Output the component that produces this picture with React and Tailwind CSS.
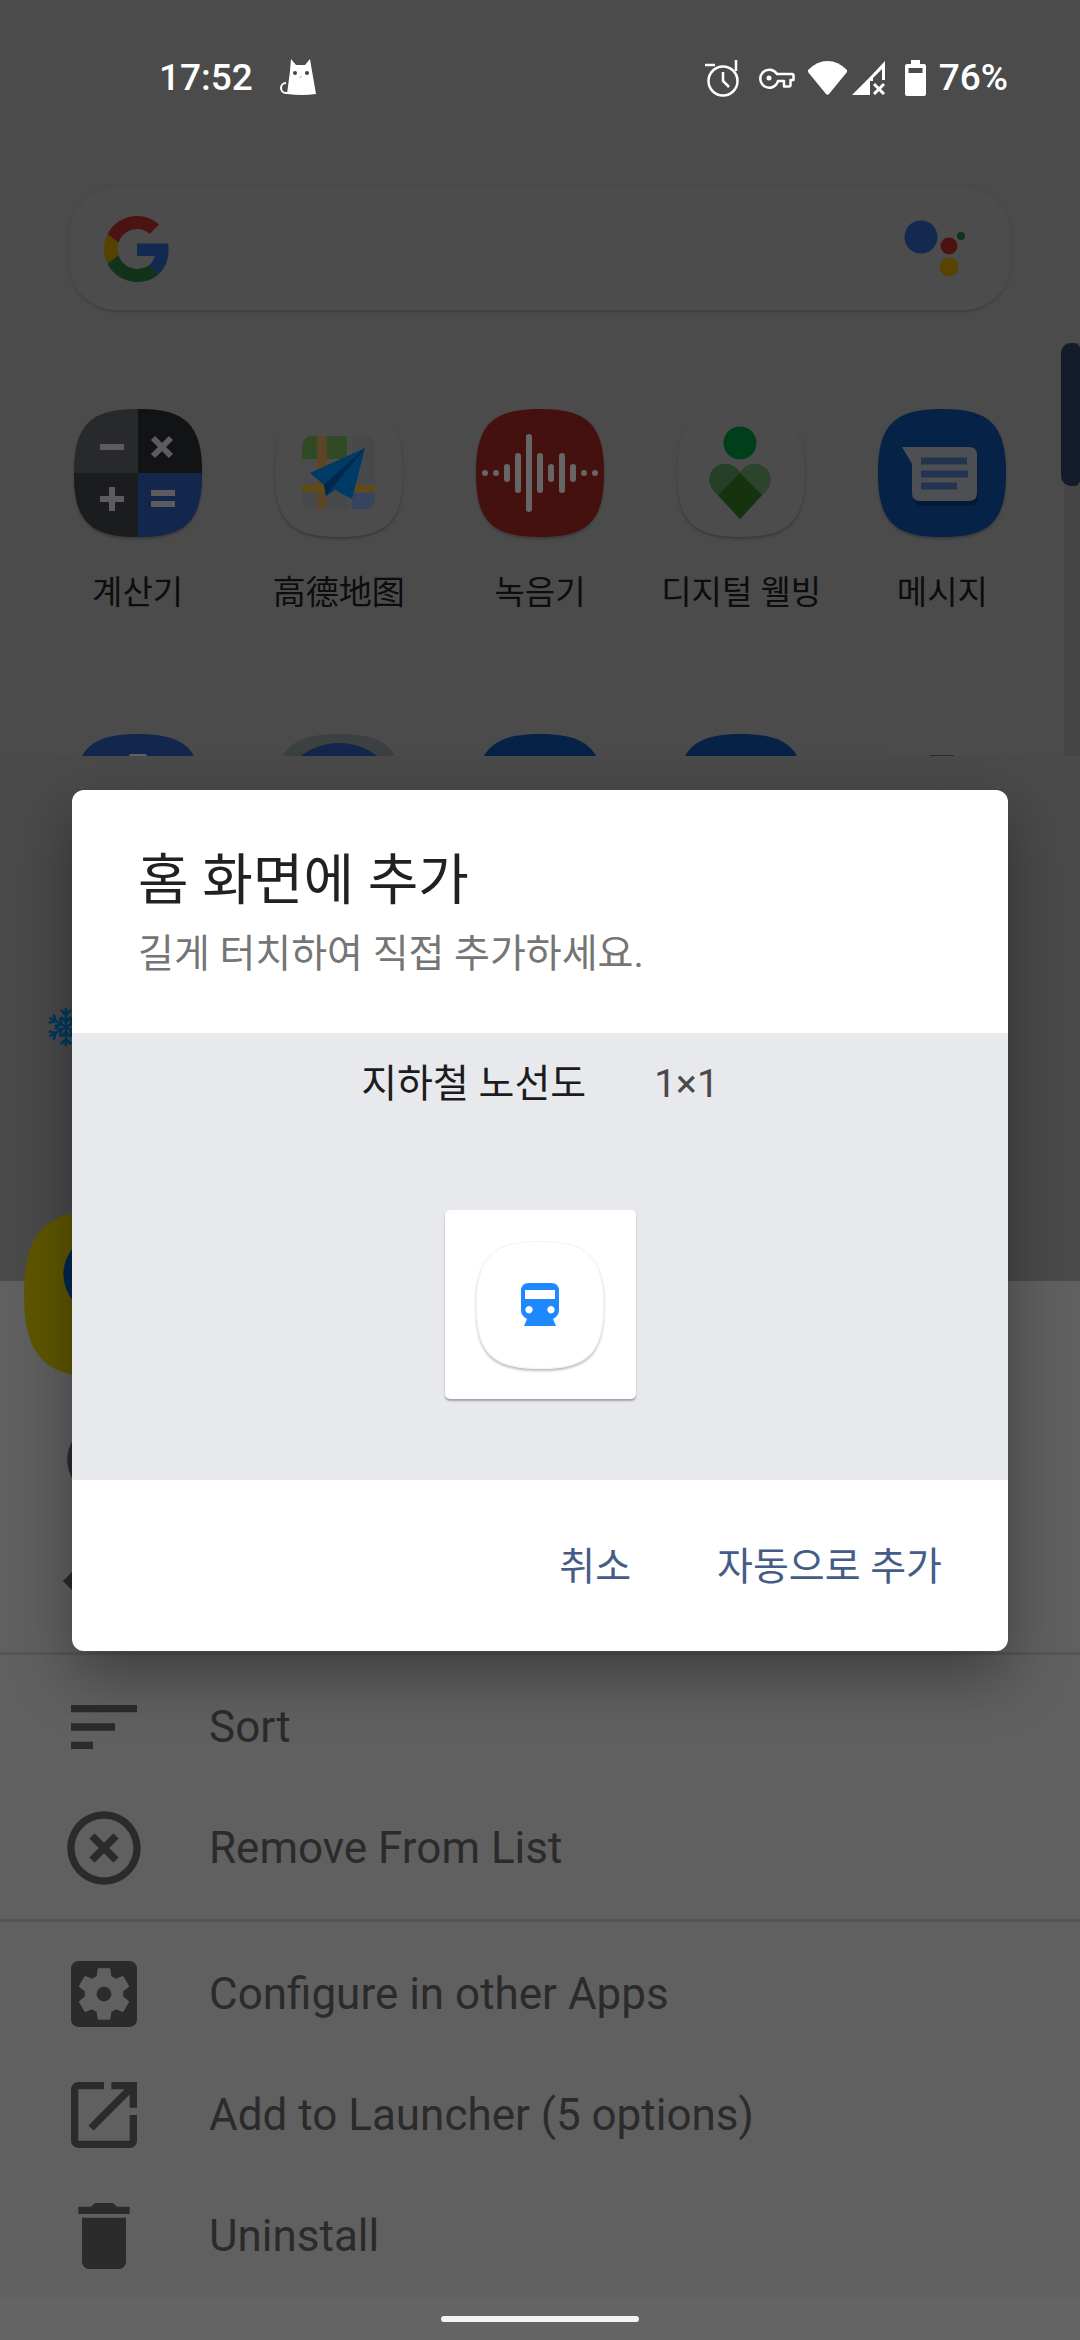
import React from "react";
import { MdSort, MdHighlightOff, MdSettingsApplications, MdOpenInNew, MdDelete, MdInfoOutline } from "react-icons/md";

const SQ = "M64 0C112 0 128 16 128 64S112 128 64 128 0 112 0 64 16 0 64 0Z";

function Squircle({ fill, id, outline, children, className = "size-32" }) {
  return (
    <svg viewBox="0 0 128 128" className={className} aria-hidden="true">
      <defs>
        <clipPath id={id}>
          <path d={SQ} />
        </clipPath>
      </defs>
      <g clipPath={`url(#${id})`}>
        <rect width="128" height="128" fill={fill} />
        {children}
        {outline && <path d={SQ} fill="none" stroke={outline} strokeWidth="2" />}
      </g>
    </svg>
  );
}

function CalculatorIcon() {
  return (
    <Squircle id="calc" fill="#28292b">
      <rect x="64" width="64" height="64" fill="#111314" />
      <rect y="64" width="64" height="64" fill="#1b1c1d" />
      <rect x="64" y="64" width="64" height="64" fill="#13274d" />
      <g stroke="#5c5c5e" strokeWidth="6" fill="none">
        <path d="M26 38h24M26 90h24M38 78v24M77 84h24M77 95h24" />
        <path d="M79 29l18 18M97 29l-18 18" />
      </g>
    </Squircle>
  );
}

function MapIcon() {
  return (
    <Squircle id="map" fill="#4c4c4c">
      <rect x="27" y="27" width="73" height="73" rx="10" fill="#474849" />
      <path d="M37 27h35v23H27V37a10 10 0 0 1 10-10Z" fill="#2f4a25" />
      <path d="M27 50h45v25H27zM72 27h5v73h-5z" fill="#4b4b4b" />
      <path d="M77 84h23v6a10 10 0 0 1-10 10H77z" fill="#35455f" />
      <path d="M42 27h10v73H42z" fill="#5c4526" />
      <path d="M27 76h73v7H27z" fill="#604b15" />
      <path d="M35 64 90 39 77 90 60 81 51 87 49 76Z" fill="#003a66" />
      <path d="M90 39 49 76l2 11 7-9Z" fill="#00284a" />
    </Squircle>
  );
}

const WAVES = [
  [31, 9], [42, 20], [53, 39], [64, 20], [75, 9], [86, 20], [97, 9],
];

function RecorderIcon() {
  return (
    <Squircle id="rec" fill="#45110f">
      <g fill="#666">
        <circle cx="9" cy="64" r="3" />
        <circle cx="20" cy="64" r="3" />
        <circle cx="108" cy="64" r="3" />
        <circle cx="119" cy="64" r="3" />
        {WAVES.map(([x, h]) => (
          <rect key={x} x={x - 3} y={64 - h} width="6" height={h * 2} rx="3" />
        ))}
      </g>
    </Squircle>
  );
}

function WellbeingIcon() {
  return (
    <Squircle id="well" fill="#4c4c4c">
      <circle cx="63" cy="34" r="16.500" fill="#003f19" />
      <path d="M63 110 36 81A16 16 0 0 1 58 58l27 28Z" fill="#263f27" />
      <path d="M63 110 90 81A16 16 0 0 0 68 58L41 86Z" fill="#2c432c" />
      <path d="M63 64 85 86 63 110 41 86Z" fill="#15330f" />
    </Squircle>
  );
}

function MessagesIcon() {
  return (
    <Squircle id="msg" fill="#062246">
      <path d="M26 41h66q8 0 8 8v40q0 8-8 8H44q-8 0-8-8V57Z" fill="#041a36" />
      <path d="M24 38h67q8 0 8 8v38q0 8-8 8H42q-8 0-8-8V55Z" fill="#4d4f52" />
      <path d="M43 52h46M43 65h47M43 77h36" stroke="#22344f" strokeWidth="7" />
    </Squircle>
  );
}

const APPS = [
  { name: "계산기", Icon: CalculatorIcon },
  { name: "高德地图", Icon: MapIcon },
  { name: "녹음기", Icon: RecorderIcon },
  { name: "디지털 웰빙", Icon: WellbeingIcon },
  { name: "메시지", Icon: MessagesIcon },
];

function GoogleLogo() {
  return (
    <svg viewBox="0 0 48 48" className="size-[66px]" aria-hidden="true">
      <path fill="#4c1312" d="M24 9.500c3.540 0 6.710 1.220 9.210 3.600l6.850-6.850C35.900 2.380 30.470 0 24 0 14.620 0 6.510 5.380 2.560 13.220l7.980 6.190C12.430 13.720 17.740 9.500 24 9.500z" />
      <path fill="#13294f" d="M46.980 24.550c0-1.570-.15-3.090-.38-4.550H24v9.020h12.940c-.58 2.960-2.260 5.480-4.780 7.180l7.730 6c4.510-4.180 7.090-10.360 7.090-17.650z" />
      <path fill="#564200" d="M10.530 28.590c-.48-1.450-.76-2.990-.76-4.590s.27-3.140.76-4.590l-7.980-6.190C.92 16.460 0 20.120 0 24c0 3.880.92 7.540 2.560 10.780l7.970-6.190z" />
      <path fill="#10331a" d="M24 48c6.480 0 11.930-2.130 15.890-5.810l-7.730-6c-2.150 1.450-4.920 2.300-8.160 2.300-6.260 0-11.570-4.220-13.470-9.910l-7.980 6.190C6.510 42.620 14.620 48 24 48z" />
    </svg>
  );
}

function AssistantLogo() {
  return (
    <svg viewBox="0 0 64 64" className="size-16" aria-hidden="true">
      <circle cx="20" cy="20" r="16.500" fill="#13294f" />
      <circle cx="48" cy="29" r="8.500" fill="#4a1310" />
      <circle cx="60" cy="19" r="4" fill="#10331c" />
      <circle cx="48" cy="50" r="9.500" fill="#574400" />
    </svg>
  );
}

function StatusBar() {
  return (
    <header className="flex h-[155px] items-center pl-[159px] pr-[72px] text-[37px] font-medium text-white">
      <span>17:52</span>
      <svg viewBox="0 0 38 38" className="ml-[26px] size-[38px]" aria-label="고양이">
        <path d="M12 0l5 6h9l5-6 2 12 4 23q-14 2-29 0l3-23Z" fill="#fff" />
        <path d="M7 24a5 5 0 0 0 0 10h6" fill="none" stroke="#fff" strokeWidth="2" />
        <circle cx="16" cy="14" r="2" fill="#444" />
        <circle cx="28" cy="14" r="2" fill="#444" />
        <path d="M20 18h3" stroke="#bbb" />
      </svg>
      <div className="ml-auto flex items-center">
        <svg viewBox="0 0 36 38" className="h-[38px] w-9" fill="none" stroke="#fff" strokeWidth="2.500" aria-label="알람">
          <circle cx="18" cy="22" r="14.500" />
          <path d="M18 13v9l6 6M0 6h10M31 1v11" />
        </svg>
        <svg viewBox="0 0 36 22" className="ml-[18px] h-[22px] w-9" fill="none" stroke="#fff" strokeWidth="2.500" strokeLinejoin="round" aria-label="VPN">
          <path d="M18 7h15q1.500 0 1.500 1.500V13h-3v5q0 1.500-1.500 1.500h-5V14h-6A9 9 0 1 1 18 7Z" />
          <circle cx="10" cy="11" r="2.500" fill="#fff" stroke="none" />
        </svg>
        <svg viewBox="0 0 39 34" className="ml-[13px] h-[34px] w-[39px]" aria-label="Wi-Fi">
          <path d="M0 9Q9 0 19.500 0T39 9v2L21 33q-1.500 1.500-3 0L0 11Z" fill="#fff" />
        </svg>
        <svg viewBox="0 0 33 34" className="ml-[5px] h-[34px] w-[33px]" aria-label="신호 없음">
          <path d="M0 34 18 16v18ZM18 16 33 0v19h-3V8L21 17v3h-3Z" fill="#fff" />
          <path d="m22 23 10 10M32 23 22 33" stroke="#fff" strokeWidth="3" />
        </svg>
        <svg viewBox="0 0 21 36" className="ml-[20px] h-9 w-[21px]" aria-label="배터리">
          <path fillRule="evenodd" d="M6 0h9v4h4q2 0 2 2v28q0 2-2 2H2q-2 0-2-2V6q0-2 2-2h4ZM3.500 8v5h14V8Z" fill="#fff" />
        </svg>
        <span className="ml-[13px]">76%</span>
      </div>
    </header>
  );
}

function AppDrawer() {
  return (
    <section className="relative h-[601px] overflow-hidden">
      <div className="mx-[69px] mt-8 flex h-[125px] items-center justify-between rounded-[48px] border-b-2 border-[#424242] bg-[#4c4c4c] pl-[35px] pr-[46px] shadow-[0_0_3px_#444444]">
        <GoogleLogo />
        <AssistantLogo />
      </div>
      <div className="mt-[97px] grid grid-cols-5 px-[37px]">
        {APPS.map(({ name, Icon }) => (
          <button key={name} type="button" className="flex flex-col items-center gap-8 text-[33px] leading-[48px] text-[#0d0d0d]">
            <span className="rounded-[50px] drop-shadow-[0_2px_1px_#3a3a3a]">
              <Icon />
            </span>
            {name}
          </button>
        ))}
      </div>
      <div className="mt-[117px] grid grid-cols-5 justify-items-center px-[37px]">
        <Squircle id="r1" fill="#13274d">
          <rect x="55" y="20" width="18" height="30" rx="2" fill="#5f6266" />
        </Squircle>
        <Squircle id="r2" fill="#3b4041">
          <circle cx="64" cy="72" r="63" fill="#13274d" />
        </Squircle>
        <Squircle id="r3" fill="#062246" />
        <Squircle id="r4" fill="#062246" />
        <Squircle id="r5" fill="#4c4c4c">
          <rect x="52" y="21" width="24" height="30" fill="#2c2c2c" />
        </Squircle>
      </div>
      <div className="absolute bottom-0 right-0 top-[188px] flex w-[19px] justify-end">
        <div className="w-4 bg-[#454545]" />
        <div className="absolute left-0 top-0 h-[143px] w-full rounded-l-[10px] rounded-r-[6px] bg-[#141b2a]" />
      </div>
    </section>
  );
}

function HiddenDetails() {
  return (
    <section className="h-[525px] bg-[#4a4a4a] pl-6 pt-[251px]">
      <svg viewBox="-20 -20 40 40" className="ml-[22px] size-10" stroke="#00395e" strokeWidth="2.500" fill="none" aria-hidden="true">
        {[0, 60, 120, 180, 240, 300].map((a) => (
          <g key={a} transform={`rotate(${a})`}>
            <path d="M0 0V-19M-5-17l5 5 5-5M-5-10l5 5 5-5" />
          </g>
        ))}
      </svg>
      <Squircle id="subway" fill="#5f5600" className="relative mt-[163px] size-[168px]">
        <circle cx="61" cy="49" r="31" fill="#00294f" />
      </Squircle>
    </section>
  );
}

function DiamondIcon(props) {
  return (
    <svg viewBox="0 0 24 24" fill="currentColor" {...props}>
      <path d="M.8 12 12 .8 23.200 12 12 23.200Z" />
    </svg>
  );
}

function MenuRow({ icon: Icon, label }) {
  return (
    <li>
      <button type="button" aria-label={label || "세부정보"} className="flex h-[121px] w-full items-center gap-[61px] pl-[60px] text-left text-[44px]">
        <Icon className="size-[88px] shrink-0" aria-hidden="true" />
        {label}
      </button>
    </li>
  );
}

function OptionsSheet() {
  return (
    <nav className="bg-[#606060] pt-[118px] text-[#2b2b2b]">
      <ul className="pb-[11px]">
        <MenuRow icon={MdInfoOutline} />
        <MenuRow icon={DiamondIcon} />
      </ul>
      <ul className="border-y-[3px] border-[#555] py-[11px]">
        <MenuRow icon={MdSort} label="Sort" />
        <MenuRow icon={MdHighlightOff} label="Remove From List" />
      </ul>
      <ul className="pb-px pt-[11px]">
        <MenuRow icon={MdSettingsApplications} label="Configure in other Apps" />
        <MenuRow icon={MdOpenInNew} label="Add to Launcher (5 options)" />
        <MenuRow icon={MdDelete} label="Uninstall" />
      </ul>
    </nav>
  );
}

function TrainIcon() {
  return (
    <svg viewBox="0 0 38 43" className="h-[43px] w-[38px]" aria-hidden="true">
      <path fillRule="evenodd" fill="#1e88ff" d="M8 0h22q8 0 8 8v19q0 6-6 9l3 7H3l3-7Q0 33 0 27V8Q0 0 8 0ZM4 7v9h30V7ZM8 23a3.700 3.700 0 1 0 .01 0ZM30 23a3.700 3.700 0 1 0 .01 0Z" />
    </svg>
  );
}

function AddDialog() {
  return (
    <div className="absolute inset-x-0 top-[790px] px-[72px]">
      <section role="dialog" aria-labelledby="dialog-title" className="overflow-hidden rounded-xl bg-white shadow-[0_24px_60px_rgba(0,0,0,0.35)]">
        <div className="h-[243px] px-[66px] pt-[50px]">
          <h1 id="dialog-title" className="text-[55px] leading-[80px] text-[#212121]">홈 화면에 추가</h1>
          <p className="mt-1 text-[39px] leading-[60px] text-[#757575]">길게 터치하여 직접 추가하세요.</p>
        </div>
        <div className="flex h-[447px] flex-col items-center bg-[#e8e9ed] pt-[21px]">
          <div className="flex gap-[68px] text-[39px] leading-[60px]">
            <span className="text-[#1c1c1e]">지하철 노선도</span>
            <span className="text-[#4a4a4c]">1×1</span>
          </div>
          <div className="mt-24 flex h-[189px] w-[191px] items-center justify-center rounded-[5px] bg-white shadow-[0_2px_2px_rgba(0,0,0,0.3)]">
            <div className="grid place-items-center drop-shadow-[0_2px_1px_rgba(0,0,0,0.25)]">
              <Squircle id="preview" fill="#fff" outline="#f3f3f3" className="col-start-1 row-start-1 size-32" />
              <span className="col-start-1 row-start-1">
                <TrainIcon />
              </span>
            </div>
          </div>
        </div>
        <div className="flex h-[171px] items-center justify-end gap-[86px] px-[66px] pt-[3px] text-[39px] leading-[60px] text-[#455d86]">
          <button type="button">취소</button>
          <button type="button">자동으로 추가</button>
        </div>
      </section>
    </div>
  );
}

export default function App() {
  return (
    <main className="relative min-h-screen overflow-hidden bg-[#4b4b4b] font-[Roboto,'Noto_Sans_CJK_KR',sans-serif]">
      <StatusBar />
      <AppDrawer />
      <HiddenDetails />
      <OptionsSheet />
      <footer className="flex h-11 items-center justify-center bg-[#646464]">
        <div className="h-[6px] w-[198px] rounded-full bg-[#f4f4f4]" />
      </footer>
      <AddDialog />
    </main>
  );
}
